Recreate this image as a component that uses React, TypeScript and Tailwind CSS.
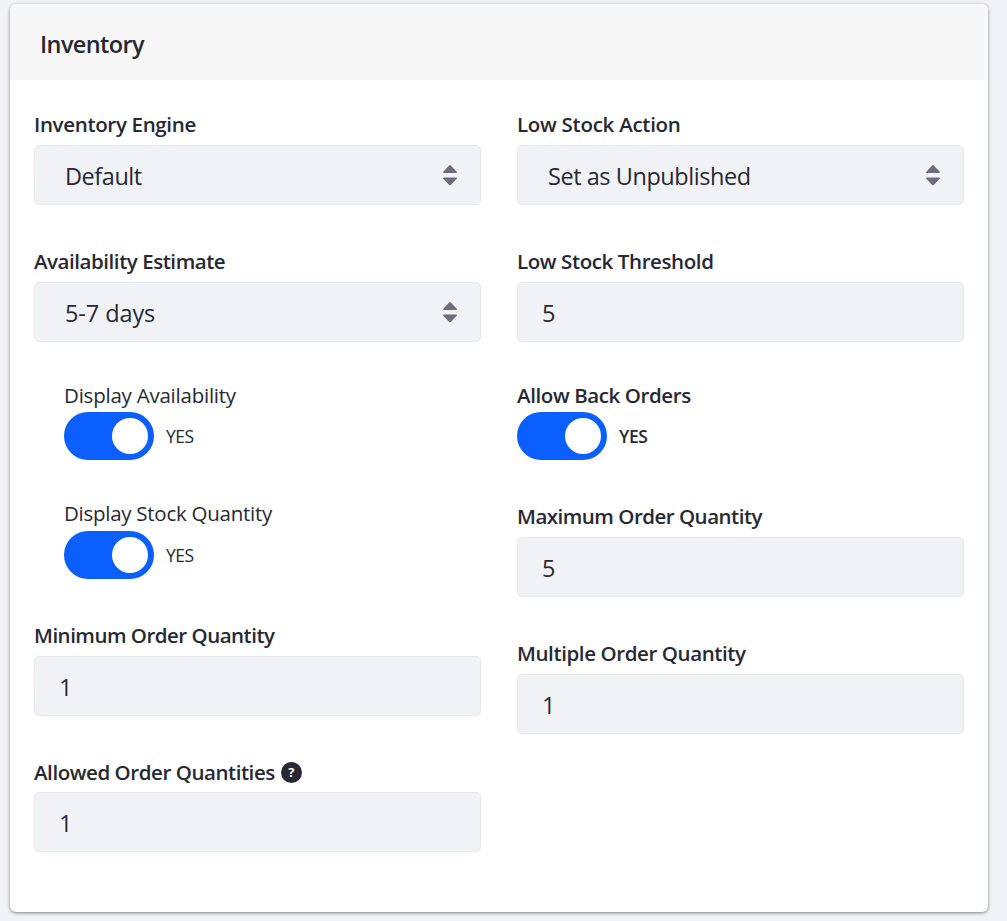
import { useState } from 'react';
import type { ReactNode } from 'react';

type LabelProps = { children: ReactNode; className?: string };

function Label({ children, className = 'font-semibold tracking-[-0.4px]' }: LabelProps) {
  return (
    <div className={`flex h-[30px] items-center whitespace-nowrap text-[20.5px] leading-[30px] ${className}`}>
      {children}
    </div>
  );
}

function SortCarets() {
  return (
    <svg width="14" height="21" viewBox="0 0 14 21" fill="#6b6c7e" aria-hidden="true">
      <path d="M6.2.4a1.1 1.1 0 0 1 1.6 0L13.7 6.7c.5.6.3 1.3-.5 1.3H.8C0 8-.2 7.3.3 6.7Z" />
      <path d="M6.2 20.1a1.1 1.1 0 0 0 1.6 0L13.7 13.8c.5-.6.3-1.3-.5-1.3H.8c-.8 0-1 .7-.5 1.3Z" />
    </svg>
  );
}

const box =
  'flex h-[60px] w-full items-center rounded-[5px] border border-[#e7e7ed] bg-[#f1f2f5] text-[23.5px] leading-[58px]';

function Select({ value, className = 'tracking-[-0.45px]' }: { value: string; className?: string }) {
  return (
    <button type="button" className={`${box} justify-between pl-[30px] pr-[23px]`}>
      <span className={`pt-[2px] ${className}`}>{value}</span>
      <SortCarets />
    </button>
  );
}

function Input({ initial }: { initial: string }) {
  const [value, setValue] = useState(initial);
  return (
    <input
      className={`${box} px-6 pt-[2px] outline-none`}
      value={value}
      onChange={(e) => setValue(e.target.value)}
    />
  );
}

function Toggle({ className = '' }: { className?: string }) {
  const [on, setOn] = useState(true);
  return (
    <button type="button" onClick={() => setOn(!on)} className="flex h-12 items-center gap-3">
      <span
        className={`flex h-12 w-[90px] items-center rounded-full px-[6px] ${on ? 'justify-end bg-[#0b5fff]' : 'justify-start bg-[#a7a9bc]'}`}
      >
        <span className="size-9 rounded-full bg-white" />
      </span>
      <span className={`text-[17.5px] leading-6 ${className}`}>{on ? 'YES' : 'NO'}</span>
    </button>
  );
}

export default function App() {
  return (
    <div className="h-[921px] w-full bg-[#f1f2f5] pl-[10px] pr-[19px] pt-1 font-['Open_Sans','Noto_Sans',sans-serif] text-[#272833]">
      <section className="h-[908px] overflow-hidden rounded-[6px] bg-white shadow-[0_1px_5px_-1px_rgba(0,0,0,0.3),0_1px_3px_0_rgba(0,0,0,0.3)]">
        <header className="flex h-[76px] items-center bg-[#f7f7f7] pl-[30px]">
          <h2 className="pt-[3px] text-[23.5px] font-semibold leading-9 tracking-[-0.6px]">Inventory</h2>
        </header>
        <div className="grid grid-cols-[447px_447px] gap-x-9 px-6 pt-[29px]">
          <div className="flex flex-col">
            <div className="flex flex-col gap-[6px]">
              <Label className="font-semibold tracking-[-0.33px]">Inventory Engine</Label>
              <Select value="Default" />
            </div>
            <div className="mt-[41px] flex flex-col gap-[6px]">
              <Label className="font-semibold tracking-[-0.45px]">Availability Estimate</Label>
              <Select value="5-7 days" className="tracking-[-0.1px]" />
            </div>
            <div className="mt-[38px] flex flex-col gap-[2px] pl-[30px]">
              <Label className="tracking-[-0.23px]">Display Availability</Label>
              <Toggle className="tracking-[-0.5px]" />
            </div>
            <div className="mt-[38px] flex flex-col gap-[3px] pl-[30px]">
              <Label className="tracking-[-0.27px]">Display Stock Quantity</Label>
              <Toggle className="tracking-[-0.5px]" />
            </div>
            <div className="mt-[41px] flex flex-col gap-[6px]">
              <Label className="font-semibold tracking-[-0.5px]">Minimum Order Quantity</Label>
              <Input initial="1" />
            </div>
            <div className="mt-[41px] flex flex-col gap-[5px]">
              <Label className="font-semibold tracking-[-0.44px]">
                Allowed Order Quantities
                <span className="ml-[6px] flex size-[21px] items-center justify-center rounded-full bg-[#272833] text-[13px] font-bold leading-none tracking-normal text-white">
                  ?
                </span>
              </Label>
              <Input initial="1" />
            </div>
          </div>
          <div className="flex flex-col">
            <div className="flex flex-col gap-[6px]">
              <Label className="font-semibold tracking-[-0.27px]">Low Stock Action</Label>
              <Select value="Set as Unpublished" />
            </div>
            <div className="mt-[41px] flex flex-col gap-[6px]">
              <Label>Low Stock Threshold</Label>
              <Input initial="5" />
            </div>
            <div className="mt-[38px] flex flex-col gap-[2px]">
              <Label>Allow Back Orders</Label>
              <Toggle className="font-semibold tracking-[-0.4px]" />
            </div>
            <div className="mt-[41px] flex flex-col gap-[6px]">
              <Label className="font-semibold tracking-[-0.5px]">Maximum Order Quantity</Label>
              <Input initial="5" />
            </div>
            <div className="mt-[41px] flex flex-col gap-[6px]">
              <Label>Multiple Order Quantity</Label>
              <Input initial="1" />
            </div>
          </div>
        </div>
      </section>
    </div>
  );
}
